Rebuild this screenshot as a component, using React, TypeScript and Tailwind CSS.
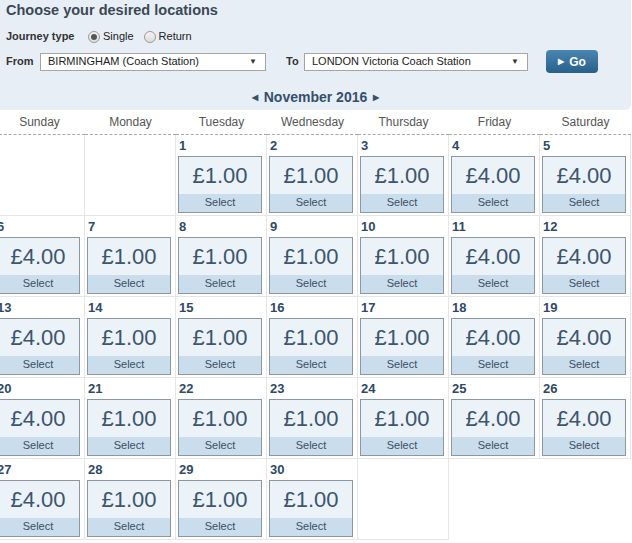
const dayNames = ["Sunday", "Monday", "Tuesday", "Wednesday", "Thursday", "Friday", "Saturday"];

type Cell = { day: number; price: string } | "empty" | "blank";

// November 2016 starts on a Tuesday
const cells: Cell[] = [];
cells.push("empty", "empty");
for (let d = 1; d <= 30; d++) {
  const dow = (d + 1) % 7;
  const price = dow === 0 || dow === 5 || dow === 6 ? "£4.00" : "£1.00";
  cells.push({ day: d, price });
}
cells.push("empty", "blank", "blank");

function Radio({ checked, label }: { checked?: boolean; label: string }) {
  return (
    <span className="flex items-center gap-[3px]">
      <span className="flex h-[12px] w-[12px] items-center justify-center rounded-full border border-[#9a9a9a] bg-gradient-to-b from-[#f4f4f4] to-[#dcdcdc]">
        {checked && <span className="h-[6px] w-[6px] rounded-full bg-[#555]" />}
      </span>
      <span className="text-[11px] text-[#222]">{label}</span>
    </span>
  );
}

function Dropdown({ value, width }: { value: string; width: string }) {
  return (
    <div
      className={`flex h-[18px] items-center justify-between border border-[#a5a5a5] bg-white pl-[7px] pr-[8px] text-[11px] text-[#222] ${width}`}
    >
      <span>{value}</span>
      <span className="text-[8px] text-[#333]">▼</span>
    </div>
  );
}

export default function App() {
  return (
    <div
      className="h-[543px] w-[632px] overflow-hidden bg-white"
      style={{ fontFamily: '"Liberation Sans", Arial, sans-serif' }}
    >
      <div className="h-[110px] w-[631px] rounded-br-[6px] bg-[#e8eef5]">
        <h2 className="pl-[6px] text-[14.5px] font-bold leading-[20px] text-[#3b4856]">
          Choose your desired locations
        </h2>
        <div className="mt-[8px] flex h-[17px] items-center pl-[6px]">
          <span className="w-[82px] text-[11px] font-bold text-[#333]">Journey type</span>
          <Radio checked label="Single" />
          <span className="w-[10px]" />
          <Radio label="Return" />
        </div>
        <div className="mt-[5px] flex h-[23px] items-center pl-[6px]">
          <span className="w-[34px] text-[11px] font-bold text-[#333]">From</span>
          <Dropdown value="BIRMINGHAM (Coach Station)" width="w-[226px]" />
          <span className="ml-[20px] w-[18px] text-[11px] font-bold text-[#333]">To</span>
          <Dropdown value="LONDON Victoria Coach Station" width="w-[224px]" />
          <button className="ml-[18px] flex h-[23px] w-[52px] items-center justify-center gap-[5px] rounded-[4px] bg-gradient-to-b from-[#4a86b2] to-[#28608a] text-[12px] font-bold text-white">
            <span className="text-[8px]">▶</span>
            <span>Go</span>
          </button>
        </div>
        <div className="mt-[16px] flex h-[17px] items-center justify-center gap-[6px] text-[14px] font-bold text-[#34506d]">
          <span className="text-[8px]">◀</span>
          <span>November 2016</span>
          <span className="text-[8px]">▶</span>
        </div>
      </div>

      <div className="-ml-[6px] grid w-[637px] grid-cols-7">
        {dayNames.map((n) => (
          <div
            key={n}
            className="h-[25px] border-b border-dashed border-[#a9a9a9] text-center text-[12px] leading-[25px] text-[#555]"
          >
            {n}
          </div>
        ))}
        {cells.map((c, i) =>
          c === "blank" ? (
            <div key={i} className="h-[81px]" />
          ) : c === "empty" ? (
            <div key={i} className="h-[81px] border-b border-r border-[#e6e6e6]" />
          ) : (
            <div key={i} className="h-[81px] border-b border-r border-[#e6e6e6] pt-[3px]">
              <div className="pl-[3px] text-[13px] font-bold leading-[15px] text-[#2f4a66]">{c.day}</div>
              <div className="ml-[2px] mt-[3px] flex h-[57px] w-[84px] flex-col border border-[#8d979f]">
                <div className="flex h-[37px] items-center justify-center bg-[#ebf2f8] pb-[1px] text-[22px] text-[#3d556d]">
                  {c.price}
                </div>
                <div className="flex h-[18px] items-center justify-center bg-[#c9ddec] pb-[1px] text-[11px] text-[#3b4f63]">
                  Select
                </div>
              </div>
            </div>
          )
        )}
      </div>
    </div>
  );
}
